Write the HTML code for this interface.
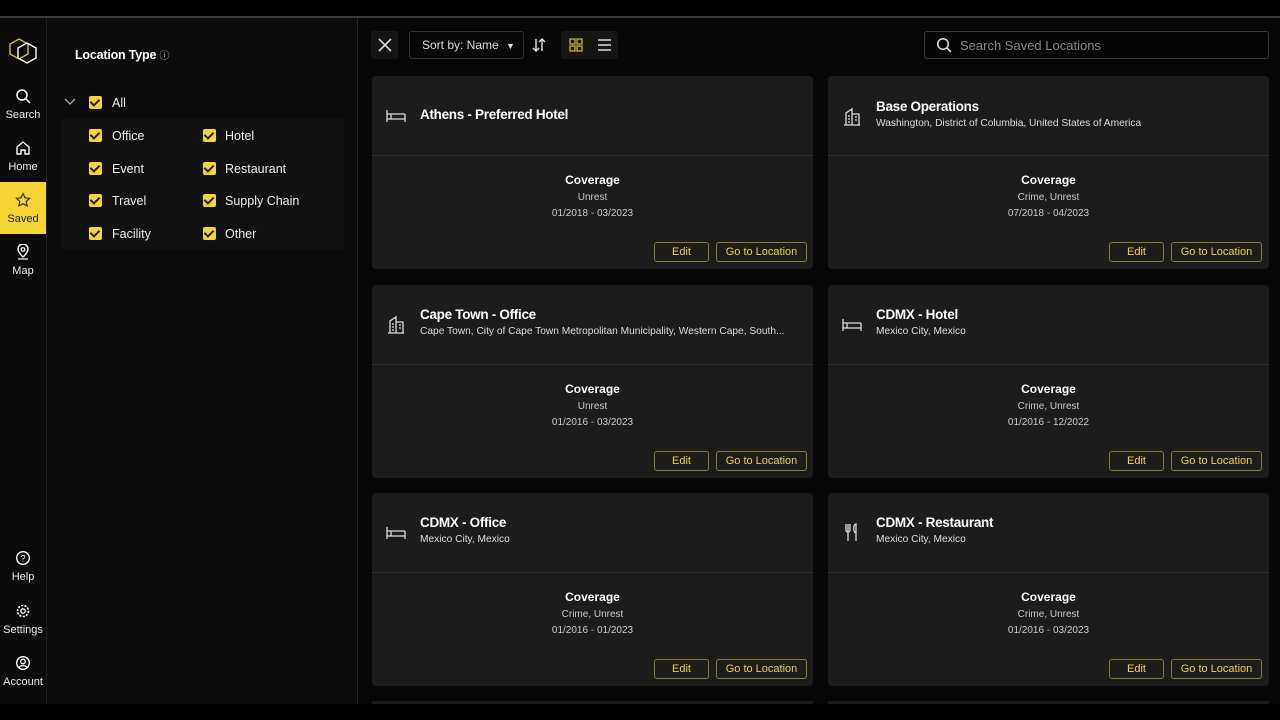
<!DOCTYPE html>
<html><head><meta charset="utf-8"><style>
*{box-sizing:border-box;margin:0;padding:0}
body{width:1280px;height:720px;background:#000;font-family:"Liberation Sans",sans-serif;color:#fff;position:relative;overflow:hidden}
.topline{position:absolute;left:0;top:16px;width:1280px;height:2px;background:#3a3a3a}
.side{position:absolute;left:0;top:18px;width:47px;height:686px;background:#0b0b0b;border-right:1px solid #1e1e1e}
.nav{position:absolute;left:0;width:46px;height:52px;text-align:center;font-size:11px;color:#eee}
.nav svg{display:block;margin:10px auto 5px}
.nav.act{background:#f5d536;color:#222}
.filter{position:absolute;left:47px;top:18px;width:311px;height:686px;background:#0c0c0c;border-right:1px solid #262626}
.main{position:absolute;left:358px;top:18px;width:922px;height:686px;background:#070707}
.cb{position:absolute;width:13px;height:13px;background:#f5d536;border-radius:2px}
.cb:after{content:"";position:absolute;left:3px;top:1px;width:4px;height:7px;border:solid #222;border-width:0 2px 2px 0;transform:rotate(45deg)}
.lbl{position:absolute;font-size:12.5px;color:#eee}
.card{position:absolute;width:441px;height:193px;background:#1c1c1c;border-radius:4px}
.card .hd{height:80px;border-bottom:1px solid #2e2e2e;position:relative}
.card .ic{position:absolute;left:13px;top:30px}
.card .t{position:absolute;left:48px;font-size:13.5px;font-weight:bold;color:#fff;letter-spacing:-.3px}
.card .s{position:absolute;left:48px;top:50px;font-size:10.2px;color:#ddd;white-space:nowrap}
.cov{position:absolute;top:97px;width:100%;text-align:center}
.cov b{display:block;font-size:12px;color:#fff}
.cov span{display:block;font-size:10px;color:#ccc;margin-top:5px}
.btn{position:absolute;top:166px;height:20px;border:1px solid #8a7a2a;border-radius:3px;color:#f2d33a;font-size:11px;line-height:18px;text-align:center}
</style></head><body>
<div class="topline"></div>
<div class="side">
 <svg style="position:absolute;left:7px;top:19px" width="32" height="28" viewBox="0 0 32 28"><path d="M12 2l9 5v10l-9 5-9-5V7z" fill="none" stroke="#d9c33a" stroke-width="1.4"/><path d="M20 6l9 5v10l-9 5-9-5V11z" fill="none" stroke="#fff" stroke-width="1.4"/></svg>
 <div class="nav" style="top:60px"><svg width="16" height="16" viewBox="0 0 16 16"><circle cx="7" cy="7" r="5" fill="none" stroke="#fff" stroke-width="1.5"/><path d="M11 11l4 4" stroke="#fff" stroke-width="1.5"/></svg>Search</div>
 <div class="nav" style="top:112px"><svg width="16" height="16" viewBox="0 0 16 16"><path d="M2 7l6-5 6 5v7H10V10H6v4H2z" fill="none" stroke="#fff" stroke-width="1.4"/></svg>Home</div>
 <div class="nav act" style="top:164px"><svg width="16" height="16" viewBox="0 0 16 16"><path d="M8 1.5l2 4.3 4.6.5-3.4 3.1 1 4.6L8 11.7 3.8 14l1-4.6L1.4 6.3 6 5.8z" fill="none" stroke="#333" stroke-width="1.2"/></svg>Saved</div>
 <div class="nav" style="top:216px"><svg width="16" height="16" viewBox="0 0 16 16"><path d="M8 13s-5-4.5-5-8a5 5 0 0110 0c0 3.5-5 8-5 8z" fill="none" stroke="#fff" stroke-width="1.4"/><circle cx="8" cy="5.5" r="1.8" fill="none" stroke="#fff" stroke-width="1.2"/><path d="M3 15h10" stroke="#fff" stroke-width="1.2"/></svg>Map</div>
 <div class="nav" style="top:522px"><svg width="16" height="16" viewBox="0 0 16 16"><circle cx="8" cy="8" r="6.3" fill="none" stroke="#fff" stroke-width="1.4"/><text x="8" y="11.5" font-size="9" text-anchor="middle" fill="#fff" font-family="Liberation Sans">?</text></svg>Help</div>
 <div class="nav" style="top:575px"><svg width="16" height="16" viewBox="0 0 16 16"><circle cx="8" cy="8" r="5.5" fill="none" stroke="#fff" stroke-width="1.6" stroke-dasharray="2.2 1.2"/><circle cx="8" cy="8" r="2.2" fill="none" stroke="#fff" stroke-width="1.3"/></svg>Settings</div>
 <div class="nav" style="top:627px"><svg width="16" height="16" viewBox="0 0 16 16"><circle cx="8" cy="8" r="6.3" fill="none" stroke="#fff" stroke-width="1.4"/><circle cx="8" cy="6.5" r="2.3" fill="none" stroke="#fff" stroke-width="1.3"/><path d="M4 12.5c1.5-2.5 6.5-2.5 8 0" fill="none" stroke="#fff" stroke-width="1.3"/></svg>Account</div>
</div>
<div class="filter">
 <div style="position:absolute;left:28px;top:29px;font-size:12.5px;font-weight:bold;letter-spacing:-.2px">Location Type <span style="font-weight:normal;font-size:10px;color:#bbb">ⓘ</span></div>
 <svg style="position:absolute;left:17px;top:80px" width="12" height="8" viewBox="0 0 12 8"><path d="M1 1l5 5 5-5" fill="none" stroke="#aaa" stroke-width="1.3"/></svg>
 <div class="cb" style="left:42px;top:78px"></div><div class="lbl" style="left:65px;top:78px">All</div>
 <div style="position:absolute;left:14px;top:101px;width:283px;height:130px;background:#111"></div>
 <div class="cb" style="left:42px;top:111px"></div><div class="lbl" style="left:65px;top:111px">Office</div>
 <div class="cb" style="left:156px;top:111px"></div><div class="lbl" style="left:178px;top:111px">Hotel</div>
 <div class="cb" style="left:42px;top:144px"></div><div class="lbl" style="left:65px;top:144px">Event</div>
 <div class="cb" style="left:156px;top:144px"></div><div class="lbl" style="left:178px;top:144px">Restaurant</div>
 <div class="cb" style="left:42px;top:176px"></div><div class="lbl" style="left:65px;top:176px">Travel</div>
 <div class="cb" style="left:156px;top:176px"></div><div class="lbl" style="left:178px;top:176px">Supply Chain</div>
 <div class="cb" style="left:42px;top:209px"></div><div class="lbl" style="left:65px;top:209px">Facility</div>
 <div class="cb" style="left:156px;top:209px"></div><div class="lbl" style="left:178px;top:209px">Other</div>
</div>
<div class="main">
 <div style="position:absolute;left:13px;top:13px;width:27px;height:28px;background:#151515;border-radius:3px"><svg style="margin:7px" width="14" height="14" viewBox="0 0 14 14"><path d="M1 1l12 12M13 1L1 13" stroke="#ddd" stroke-width="1.6"/></svg></div>
 <div style="position:absolute;left:51px;top:13px;width:115px;height:28px;border:1px solid #333;border-radius:3px;font-size:12px;color:#ddd;line-height:26px;padding-left:12px">Sort by: Name <span style="font-size:9px;margin-left:4px">▼</span></div>
 <svg style="position:absolute;left:173px;top:19px" width="16" height="16" viewBox="0 0 16 16"><path d="M5 2v12M2 11l3 3 3-3M11 14V2M8 5l3-3 3 3" fill="none" stroke="#ddd" stroke-width="1.5"/></svg>
 <div style="position:absolute;left:203px;top:13px;width:57px;height:28px;background:#151515;border-radius:3px"></div>
 <svg style="position:absolute;left:211px;top:20px" width="14" height="14" viewBox="0 0 14 14"><g fill="none" stroke="#d9c33a" stroke-width="1.2"><rect x="1" y="1" width="5" height="5"/><rect x="8" y="1" width="5" height="5"/><rect x="1" y="8" width="5" height="5"/><rect x="8" y="8" width="5" height="5"/></g></svg>
 <svg style="position:absolute;left:239px;top:20px" width="15" height="14" viewBox="0 0 15 14"><path d="M1 2h13M1 7h13M1 12h13" stroke="#ddd" stroke-width="1.5"/></svg>
 <div style="position:absolute;left:566px;top:13px;width:345px;height:28px;border:1px solid #3a3a3a;border-radius:3px;background:#050505;font-size:13px;color:#888;line-height:28px;padding-left:35px">Search Saved Locations
  <svg style="position:absolute;left:11px;top:5px" width="16" height="16" viewBox="0 0 16 16"><circle cx="7" cy="7" r="5.3" fill="none" stroke="#ddd" stroke-width="1.5"/><path d="M11 11l4 4" stroke="#ddd" stroke-width="1.6"/></svg></div>
</div>
<svg width="0" height="0" style="position:absolute"><defs>
<symbol id="bed" viewBox="0 0 22 16"><path d="M2 2v12M2 11h18M20 6v8M2 6h18M6 6v5" fill="none" stroke="#ddd" stroke-width="1.3"/></symbol>
<symbol id="bld" viewBox="0 0 22 22"><path d="M3 20h16M5 20V8l6-4v16M11 9h7v11M7 11h2M7 14h2M7 17h2M14 12h2M14 15h2" fill="none" stroke="#ddd" stroke-width="1.3"/></symbol>
<symbol id="fork" viewBox="0 0 22 22"><path d="M5 3v6a2 2 0 004 0V3M7 3v17M15 20V3c-3 1-3 8 0 9" fill="none" stroke="#ddd" stroke-width="1.3"/></symbol>
</defs></svg>

<div class="card" style="left:372px;top:76px"><div class="hd"><svg class="ic" width="22" height="20"><use href="#bed"/></svg><div class="t" style="top:31px">Athens - Preferred Hotel</div></div>
<div class="cov"><b>Coverage</b><span>Unrest</span><span>01/2018 - 03/2023</span></div>
<div class="btn" style="left:282px;width:55px">Edit</div><div class="btn" style="left:344px;width:91px">Go to Location</div></div>

<div class="card" style="left:828px;top:76px"><div class="hd"><svg class="ic" width="22" height="22" style="top:29px"><use href="#bld"/></svg><div class="t" style="top:23px">Base Operations</div><div class="s" style="top:42px">Washington, District of Columbia, United States of America</div></div>
<div class="cov"><b>Coverage</b><span>Crime, Unrest</span><span>07/2018 - 04/2023</span></div>
<div class="btn" style="left:281px;width:55px">Edit</div><div class="btn" style="left:343px;width:91px">Go to Location</div></div>

<div class="card" style="left:372px;top:285px"><div class="hd"><svg class="ic" width="22" height="22" style="top:28px"><use href="#bld"/></svg><div class="t" style="top:22px">Cape Town - Office</div><div class="s" style="top:41px">Cape Town, City of Cape Town Metropolitan Municipality, Western Cape, South...</div></div>
<div class="cov"><b>Coverage</b><span>Unrest</span><span>01/2016 - 03/2023</span></div>
<div class="btn" style="left:282px;width:55px">Edit</div><div class="btn" style="left:344px;width:91px">Go to Location</div></div>

<div class="card" style="left:828px;top:285px"><div class="hd"><svg class="ic" width="22" height="20" style="top:30px"><use href="#bed"/></svg><div class="t" style="top:22px">CDMX - Hotel</div><div class="s" style="top:41px">Mexico City, Mexico</div></div>
<div class="cov"><b>Coverage</b><span>Crime, Unrest</span><span>01/2016 - 12/2022</span></div>
<div class="btn" style="left:281px;width:55px">Edit</div><div class="btn" style="left:343px;width:91px">Go to Location</div></div>

<div class="card" style="left:372px;top:493px"><div class="hd"><svg class="ic" width="22" height="20" style="top:30px"><use href="#bed"/></svg><div class="t" style="top:22px">CDMX - Office</div><div class="s" style="top:41px">Mexico City, Mexico</div></div>
<div class="cov"><b>Coverage</b><span>Crime, Unrest</span><span>01/2016 - 01/2023</span></div>
<div class="btn" style="left:282px;width:55px">Edit</div><div class="btn" style="left:344px;width:91px">Go to Location</div></div>

<div class="card" style="left:828px;top:493px"><div class="hd"><svg class="ic" width="22" height="22" style="top:28px"><use href="#fork"/></svg><div class="t" style="top:22px">CDMX - Restaurant</div><div class="s" style="top:41px">Mexico City, Mexico</div></div>
<div class="cov"><b>Coverage</b><span>Crime, Unrest</span><span>01/2016 - 03/2023</span></div>
<div class="btn" style="left:281px;width:55px">Edit</div><div class="btn" style="left:343px;width:91px">Go to Location</div></div>

<div class="card" style="left:372px;top:701px;height:3px"></div>
<div class="card" style="left:828px;top:701px;height:3px"></div>
</body></html>
